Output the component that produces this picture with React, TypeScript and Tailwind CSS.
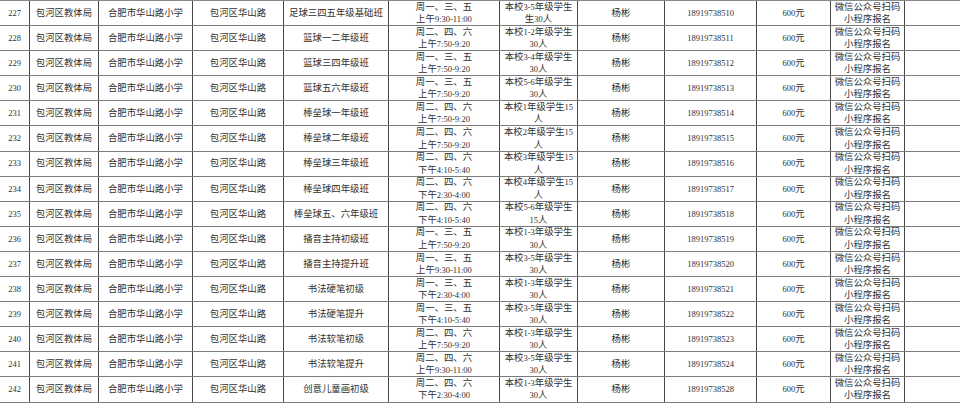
import React from "react";

type Row = {
  no: string;
  course: string;
  days: string;
  time: string;
  who: [string, string];
  phone: string;
};

const rows: Row[] = [
  { no: "227", course: "足球三四五年级基础班", days: "周一、三、五", time: "上午9:30-11:00", who: ["本校3-5年级学生", "生30人"], phone: "18919738510" },
  { no: "228", course: "篮球一二年级班", days: "周二、四、六", time: "上午7:50-9:20", who: ["本校1-2年级学生", "30人"], phone: "18919738511" },
  { no: "229", course: "篮球三四年级班", days: "周一、三、五", time: "上午7:50-9:20", who: ["本校3-4年级学生", "30人"], phone: "18919738512" },
  { no: "230", course: "篮球五六年级班", days: "周一、三、五", time: "上午7:50-9:20", who: ["本校5-6年级学生", "30人"], phone: "18919738513" },
  { no: "231", course: "棒垒球一年级班", days: "周二、四、六", time: "上午7:50-9:20", who: ["本校1年级学生15", "人"], phone: "18919738514" },
  { no: "232", course: "棒垒球二年级班", days: "周二、四、六", time: "上午7:50-9:20", who: ["本校2年级学生15", "人"], phone: "18919738515" },
  { no: "233", course: "棒垒球三年级班", days: "周二、四、六", time: "下午4:10-5:40", who: ["本校3年级学生15", "人"], phone: "18919738516" },
  { no: "234", course: "棒垒球四年级班", days: "周二、四、六", time: "下午2:30-4:00", who: ["本校4年级学生15", "人"], phone: "18919738517" },
  { no: "235", course: "棒垒球五、六年级班", days: "周二、四、六", time: "下午4:10-5:40", who: ["本校5-6年级学生", "15人"], phone: "18919738518" },
  { no: "236", course: "播音主持初级班", days: "周一、三、五", time: "上午7:50-9:20", who: ["本校1-3年级学生", "30人"], phone: "18919738519" },
  { no: "237", course: "播音主持提升班", days: "周一、三、五", time: "上午9:30-11:00", who: ["本校3-5年级学生", "30人"], phone: "18919738520" },
  { no: "238", course: "书法硬笔初级", days: "周一、三、五", time: "下午2:30-4:00", who: ["本校1-3年级学生", "30人"], phone: "18919738521" },
  { no: "239", course: "书法硬笔提升", days: "周一、三、五", time: "下午4:10-5:40", who: ["本校3-5年级学生", "30人"], phone: "18919738522" },
  { no: "240", course: "书法软笔初级", days: "周二、四、六", time: "上午7:50-9:20", who: ["本校1-3年级学生", "30人"], phone: "18919738523" },
  { no: "241", course: "书法软笔提升", days: "周二、四、六", time: "上午9:30-11:00", who: ["本校3-5年级学生", "30人"], phone: "18919738524" },
  { no: "242", course: "创意儿童画初级", days: "周二、四、六", time: "下午2:30-4:00", who: ["本校1-3年级学生", "30人"], phone: "18919738528" },
];

const CJK = /[\u3000-\u303f\u4e00-\u9fff\uff00-\uffef]/;

// digits in the source sheet are set a little smaller than the hanzi
const Mixed = ({ text }: { text: string }) => (
  <>
    {text
      .split(/([\u3000-\u303f\u4e00-\u9fff\uff00-\uffef]+)/)
      .filter(Boolean)
      .map((part, i) =>
        CJK.test(part) ? (
          <span key={i}>{part}</span>
        ) : (
          <span key={i} className="text-[8.5px]">
            {part}
          </span>
        )
      )}
  </>
);

const cell = "shrink-0 flex flex-col items-center justify-center text-center border-r border-[#4a4a4a] whitespace-nowrap";

export default function App() {
  return (
    <div
      className="w-[960px] h-[403px] overflow-hidden bg-white text-[9.4px] text-[#303030]"
      style={{ fontFamily: '"Liberation Serif", "Noto Sans CJK SC", serif' }}
    >
      <div className="border-t border-[#8a8a8a]">
        {rows.map((r) => (
          <div key={r.no} className="flex h-[25.1px] border-b border-[#7c7c7c] leading-[12.4px]">
            <div className={`${cell} w-[30px] text-[8.5px]`}>{r.no}</div>
            <div className={`${cell} w-[69px]`}>包河区教体局</div>
            <div className={`${cell} w-[94px]`}>合肥市华山路小学</div>
            <div className={`${cell} w-[91px]`}>包河区华山路</div>
            <div className={`${cell} w-[105px]`}>{r.course}</div>
            <div className={`${cell} w-[111px]`}>
              <span>{r.days}</span>
              <span>
                <Mixed text={r.time} />
              </span>
            </div>
            <div className={`${cell} w-[78px]`}>
              <span>
                <Mixed text={r.who[0]} />
              </span>
              <span>
                <Mixed text={r.who[1]} />
              </span>
            </div>
            <div className={`${cell} w-[87px]`}>杨彬</div>
            <div className={`${cell} w-[92px] text-[8.5px]`}>{r.phone}</div>
            <div className={`${cell} w-[74px]`}>
              <span>
                <Mixed text="600元" />
              </span>
            </div>
            <div className={`${cell} w-[74px]`}>
              <span>微信公众号扫码</span>
              <span>小程序报名</span>
            </div>
            <div className="flex-1" />
          </div>
        ))}
      </div>
    </div>
  );
}
